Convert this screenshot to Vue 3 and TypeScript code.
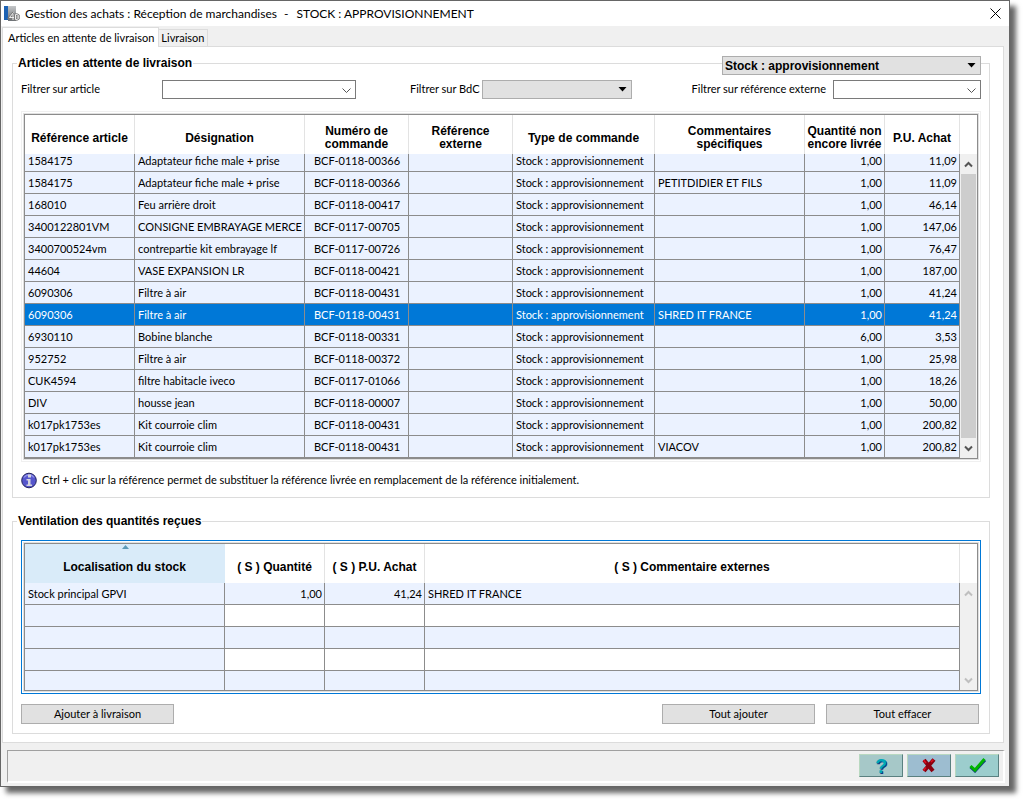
<script setup lang="ts">
import { ref } from 'vue'

interface Article {
  reference: string
  designation: string
  commande: string
  externe: string
  type: string
  commentaire: string
  quantite: string
  prix: string
}

const TYPE = 'Stock : approvisionnement'

function article(reference: string, designation: string, numero: string, commentaire: string, quantite: string, prix: string): Article {
  return { reference, designation, commande: 'BCF-' + numero, externe: '', type: TYPE, commentaire, quantite, prix }
}

const articles: Article[] = [
  article('1584175', 'Adaptateur fiche male + prise', '0118-00366', '', '1,00', '11,09'),
  article('1584175', 'Adaptateur fiche male + prise', '0118-00366', 'PETITDIDIER ET FILS', '1,00', '11,09'),
  article('168010', 'Feu arrière droit', '0118-00417', '', '1,00', '46,14'),
  article('3400122801VM', 'CONSIGNE EMBRAYAGE MERCE', '0117-00705', '', '1,00', '147,06'),
  article('3400700524vm', 'contrepartie kit embrayage lf', '0117-00726', '', '1,00', '76,47'),
  article('44604', 'VASE EXPANSION LR', '0118-00421', '', '1,00', '187,00'),
  article('6090306', 'Filtre à air', '0118-00431', '', '1,00', '41,24'),
  article('6090306', 'Filtre à air', '0118-00431', 'SHRED IT FRANCE', '1,00', '41,24'),
  article('6930110', 'Bobine blanche', '0118-00331', '', '6,00', '3,53'),
  article('952752', 'Filtre à air', '0118-00372', '', '1,00', '25,98'),
  article('CUK4594', 'filtre habitacle iveco', '0117-01066', '', '1,00', '18,26'),
  article('DIV', 'housse jean', '0118-00007', '', '1,00', '50,00'),
  article('k017pk1753es', 'Kit courroie clim', '0118-00431', '', '1,00', '200,82'),
  article('k017pk1753es', 'Kit courroie clim', '0118-00431', 'VIACOV', '1,00', '200,82'),
]

const stocks = [
  { lieu: 'Stock principal GPVI', quantite: '1,00', prix: '41,24', commentaire: 'SHRED IT FRANCE' },
  { lieu: '', quantite: '', prix: '', commentaire: '' },
  { lieu: '', quantite: '', prix: '', commentaire: '' },
  { lieu: '', quantite: '', prix: '', commentaire: '' },
  { lieu: '', quantite: '', prix: '', commentaire: '' },
]

const selected = ref(7)
const filtreArticle = ref('')
const filtreExterne = ref('')
</script>

<template>
  <div class="desktop">
    <main class="window">
      <header class="titlebar">
        <svg class="app-icon" viewBox="0 0 16 16" aria-hidden="true">
          <defs>
            <linearGradient id="metal" x1="0" y1="0" x2="0" y2="1">
              <stop offset="0" stop-color="#c4c6c8" />
              <stop offset="1" stop-color="#6d7175" />
            </linearGradient>
          </defs>
          <rect x="0" y="0" width="4" height="14" fill="#1c62b4" />
          <rect x="4" y="0" width="8" height="15" fill="url(#metal)" />
          <path d="M9.5 6.5 L5.5 11.5 H10 M9 8 V14 M11.5 8.5 V13.5 C16 14 16 8 11.5 8.5" fill="none" stroke="#777" stroke-width="2.5" />
          <path d="M9.5 6.5 L5.5 11.5 H10 M9 8 V14 M11.5 8.5 V13.5 C16 14 16 8 11.5 8.5" fill="none" stroke="#eee" stroke-width="1" />
        </svg>
        <h1>Gestion des achats : Réception de marchandises<span class="dash">-</span>STOCK : APPROVISIONNEMENT</h1>
        <button class="close" type="button" aria-label="Fermer">
          <svg viewBox="0 0 11 11" aria-hidden="true"><path d="M0.5 0.5 L10.5 10.5 M10.5 0.5 L0.5 10.5" /></svg>
        </button>
      </header>

      <nav class="tabs" role="tablist">
        <button class="tab active" type="button" role="tab" aria-selected="true">Articles en attente de livraison</button>
        <button class="tab" type="button" role="tab" aria-selected="false">Livraison</button>
      </nav>

      <section class="panel">
        <fieldset class="group">
          <legend>Articles en attente de livraison</legend>
          <div class="picker type-picker">
            <select aria-label="Type de commande"><option>Stock : approvisionnement</option></select>
            <svg class="triangle" viewBox="0 0 9 5" aria-hidden="true"><path d="M0.5 0 H8.5 L4.5 4.5 Z" /></svg>
          </div>

          <div class="filters">
            <label for="f-article">Filtrer sur article</label>
            <div class="picker">
              <input id="f-article" v-model="filtreArticle" type="text" />
              <svg class="chevron" viewBox="0 0 9 5" aria-hidden="true"><path d="M0.5 0.5 L4.5 4.5 L8.5 0.5" /></svg>
            </div>
            <label for="f-bdc" class="label-bdc">Filtrer sur BdC</label>
            <div class="picker">
              <select id="f-bdc"><option></option></select>
              <svg class="triangle" viewBox="0 0 9 5" aria-hidden="true"><path d="M0.5 0 H8.5 L4.5 4.5 Z" /></svg>
            </div>
            <label for="f-ext" class="label-ext">Filtrer sur référence externe</label>
            <div class="picker">
              <input id="f-ext" v-model="filtreExterne" type="text" />
              <svg class="chevron" viewBox="0 0 9 5" aria-hidden="true"><path d="M0.5 0.5 L4.5 4.5 L8.5 0.5" /></svg>
            </div>
          </div>

          <div class="ring">
            <div class="frame">
              <table class="grid articles">
                <colgroup>
                  <col class="w110" /><col class="w170" /><col class="w104" /><col class="w104" />
                  <col class="w142" /><col /><col class="w80" /><col class="w75" />
                </colgroup>
                <thead>
                  <tr>
                    <th>Référence article</th>
                    <th>Désignation</th>
                    <th>Numéro de<br />commande</th>
                    <th>Référence<br />externe</th>
                    <th>Type de commande</th>
                    <th>Commentaires<br />spécifiques</th>
                    <th>Quantité non<br />encore livrée</th>
                    <th>P.U. Achat</th>
                  </tr>
                </thead>
                <tbody>
                  <tr v-for="(a, i) in articles" :key="i" :class="{ selected: i === selected }" @click="selected = i">
                    <td>{{ a.reference }}</td>
                    <td><div class="clip">{{ a.designation }}</div></td>
                    <td class="center">{{ a.commande }}</td>
                    <td>{{ a.externe }}</td>
                    <td>{{ a.type }}</td>
                    <td>{{ a.commentaire }}</td>
                    <td class="num">{{ a.quantite }}</td>
                    <td class="num">{{ a.prix }}</td>
                  </tr>
                </tbody>
              </table>
              <div class="scroll">
                <div class="scroll-head"></div>
                <button type="button" aria-label="Défiler vers le haut"><svg viewBox="0 0 9 7" aria-hidden="true"><path d="M1 5.5 L4.5 2 L8 5.5" /></svg></button>
                <div class="thumb"></div>
                <button type="button" aria-label="Défiler vers le bas"><svg viewBox="0 0 9 7" aria-hidden="true"><path d="M1 1.5 L4.5 5 L8 1.5" /></svg></button>
              </div>
            </div>
          </div>

          <p class="hint">
            <svg viewBox="0 0 16 16" aria-hidden="true">
              <circle cx="8" cy="8" r="7.3" fill="#5656cc" stroke="#22225c" />
              <path d="M3 5 C5 1.5 11 1.5 13 5" fill="none" stroke="#8c8cea" stroke-width="1.5" />
              <rect x="7" y="2" width="3" height="3" fill="#d4d4de" />
              <path d="M5.5 6.5 H9.5 V12 H11 V13.5 H5.5 V12 H7 V8 H5.5 Z" fill="#d4d4de" />
            </svg>
            <span>Ctrl + clic sur la référence permet de substituer la référence livrée en remplacement de la référence initialement.</span>
          </p>
        </fieldset>

        <fieldset class="group second">
          <legend>Ventilation des quantités reçues</legend>
          <div class="ring focused">
            <div class="frame">
              <table class="grid stocks">
                <colgroup>
                  <col class="w200" /><col class="w100" /><col class="w100" /><col />
                </colgroup>
                <thead>
                  <tr>
                    <th class="sorted">
                      <svg class="sort" viewBox="0 0 7 4" aria-hidden="true"><path d="M0 4 L3.5 0 L7 4 Z" /></svg>
                      Localisation du stock
                    </th>
                    <th>( S ) Quantité</th>
                    <th>( S ) P.U. Achat</th>
                    <th>( S ) Commentaire externes</th>
                  </tr>
                </thead>
                <tbody>
                  <tr v-for="(s, i) in stocks" :key="i">
                    <td>{{ s.lieu }}</td>
                    <td class="num">{{ s.quantite }}</td>
                    <td class="num">{{ s.prix }}</td>
                    <td>{{ s.commentaire }}</td>
                  </tr>
                </tbody>
              </table>
              <div class="scroll idle">
                <div class="scroll-head"></div>
                <button type="button" aria-label="Défiler vers le haut" disabled><svg viewBox="0 0 9 7" aria-hidden="true"><path d="M1 5.5 L4.5 2 L8 5.5" /></svg></button>
                <div class="track"></div>
                <button type="button" aria-label="Défiler vers le bas" disabled><svg viewBox="0 0 9 7" aria-hidden="true"><path d="M1 1.5 L4.5 5 L8 1.5" /></svg></button>
              </div>
            </div>
          </div>
          <div class="actions">
            <button type="button">Ajouter à livraison</button>
            <span class="spacer"></span>
            <button type="button">Tout ajouter</button>
            <button type="button">Tout effacer</button>
          </div>
        </fieldset>
      </section>

      <footer class="footer">
        <button class="help" type="button" aria-label="Aide">?</button>
        <button class="cancel" type="button" aria-label="Annuler">
          <svg viewBox="0 0 14 15" aria-hidden="true">
            <path d="M2 2 L11 13 M12 1.5 L2 13" fill="none" stroke="#8a0010" stroke-width="4" />
            <path d="M1.5 2 L4 5 M9 4 L11.5 1.5 M1.5 12.5 L4 9.5" fill="none" stroke="#e01020" stroke-width="1.5" />
          </svg>
        </button>
        <button class="ok" type="button" aria-label="Valider">
          <svg viewBox="0 0 17 15" aria-hidden="true">
            <path d="M1.5 9 L6 13 L16 2" fill="none" stroke="#103a80" stroke-width="3" />
            <path d="M1.5 8 L6 12 L15.5 1" fill="none" stroke="#00b400" stroke-width="3" />
          </svg>
        </button>
      </footer>
    </main>
  </div>
</template>

<style>
body {
  margin: 0;
  background: #fff;
}
</style>

<style scoped>
.desktop {
  padding: 0 13px 12px 0;
  font: 11px/14px Lato, "Liberation Sans", Arial, sans-serif;
  color: #000;
}
.desktop * {
  box-sizing: border-box;
}
button,
input,
select {
  font: inherit;
  color: inherit;
  margin: 0;
  padding: 0;
}
.window {
  display: flex;
  flex-direction: column;
  background: #f0f0f0;
  border: 1px solid #666;
  box-shadow: 6px 6px 5px rgba(0, 0, 0, 0.6);
}
.titlebar {
  display: flex;
  align-items: center;
  height: 25px;
  padding: 0 8px 0 3px;
  background: #fff;
}
.app-icon {
  width: 16px;
  height: 16px;
  margin-right: 5px;
}
h1 {
  flex: 1;
  margin: 0;
  font: 12px/16px Lato, "Segoe UI", sans-serif;
  white-space: nowrap;
}
.dash {
  margin: 0 8px 0 7px;
}
.close {
  display: flex;
  border: 0;
  background: none;
}
.close svg {
  width: 11px;
  height: 11px;
}
.close path {
  fill: none;
  stroke: #000;
}
.tabs {
  display: flex;
  align-items: flex-end;
  height: 20px;
  margin-left: 1px;
}
.tab {
  height: 17px;
  padding: 0 2px;
  border: 1px solid #dcdcdc;
  border-width: 1px 1px 0 0;
  background: #f0f0f0;
}
.tab.active {
  position: relative;
  z-index: 1;
  height: 20px;
  margin-bottom: -1px;
  padding: 0 4px 0 5px;
  border-left-width: 1px;
  background: #fff;
}
.panel {
  margin: 0 5px 7px 1px;
  padding: 9px 13px 8px 9px;
  border: 1px solid #dcdcdc;
  background: #fff;
}
.group {
  position: relative;
  min-width: 0;
  margin: 0;
  padding: 10px 8px 8px;
  border: 1px solid #dcdcdc;
}
.group.second {
  margin-top: 16px;
  padding: 12px 8px 9px;
}
legend {
  margin-left: -4px;
  padding: 0 1px;
  font: bold 12px/14px "Liberation Sans", Arial, sans-serif;
}
.picker {
  position: relative;
  display: flex;
}
.picker input,
.picker select {
  width: 100%;
  height: 19px;
  border: 1px solid #7a7a7a;
  border-radius: 0;
  background: #fff;
  appearance: none;
}
.picker select {
  border-color: #adadad;
  background: #e1e1e1;
  padding: 0 2px;
}
.picker svg {
  position: absolute;
  pointer-events: none;
}
.triangle {
  top: 7px;
  right: 5px;
  width: 9px;
  height: 5px;
}
.chevron {
  top: 8px;
  right: 5px;
  width: 9px;
  height: 5px;
}
.chevron path {
  fill: none;
  stroke: #555;
}
.type-picker {
  position: absolute;
  top: -14px;
  right: 8px;
  width: 259px;
  font: bold 12px/14px "Liberation Sans", Arial, sans-serif;
}
.filters {
  display: grid;
  grid-template-columns: 141px 194px 126px 150px 1fr 148px;
  align-items: start;
  line-height: 18px;
  margin-bottom: 12px;
}
.label-bdc {
  padding-left: 54px;
}
.label-ext {
  padding-right: 7px;
  text-align: right;
}
.ring {
  padding: 2px;
  border: 1px solid #f0f0f0;
}
.ring.focused {
  border-color: #0078d7;
}
.frame {
  display: flex;
  border: 1px solid #8c8c8c;
  outline: 1px solid #e0e0e0;
}
.grid {
  flex: 1;
  width: 100%;
  min-width: 0;
  table-layout: fixed;
  border-spacing: 0;
}
.w75 { width: 75px; }
.w80 { width: 80px; }
.w100 { width: 100px; }
.w104 { width: 104px; }
.w110 { width: 110px; }
.w142 { width: 142px; }
.w170 { width: 170px; }
.w200 { width: 200px; }
th {
  position: relative;
  height: 39px;
  padding: 7px 0 0;
  border-right: 1px solid #e3e3e3;
  background: #fff;
  font: bold 12px/13px "Liberation Sans", Arial, sans-serif;
  white-space: nowrap;
}
th.sorted {
  background: #d9ebf9;
  border-color: #d9ebf9;
}
.sort {
  position: absolute;
  top: 1px;
  left: calc(50% - 3px);
  width: 7px;
  height: 4px;
  fill: #5c9ab8;
}
td {
  height: 22px;
  padding: 0 2px 0 3px;
  border: 0 solid #8c8c8c;
  border-width: 0 1px 1px 0;
  background: #ebf2ff;
  background-clip: padding-box;
  white-space: nowrap;
}
.clip {
  overflow: hidden;
}
.center {
  text-align: center;
}
.num {
  text-align: right;
}
.selected td {
  background-color: #0078d7;
  color: #fff;
}
.articles tbody tr:first-child td {
  height: 18px;
  padding-bottom: 3px;
}
.stocks tr:nth-child(even) td:not(:first-child) {
  background: #fff;
}
.stocks tr:last-child td {
  height: 19px;
  border-bottom-width: 0;
}
.scroll {
  display: flex;
  flex: none;
  flex-direction: column;
  width: 17px;
  padding: 0 1px;
  background: #f0f0f0;
}
.scroll-head {
  height: 39px;
  margin: 0 -1px;
  background: #fff;
}
.scroll button {
  display: flex;
  align-items: center;
  justify-content: center;
  height: 20px;
  border: 0;
  background: #f0f0f0;
}
.scroll svg {
  width: 9px;
  height: 7px;
}
.scroll path {
  fill: none;
  stroke: #555;
  stroke-width: 2;
}
.scroll.idle path {
  stroke: #bfbfbf;
}
.thumb {
  flex: 1;
  background: #cdcdcd;
}
.track {
  flex: 1;
}
.hint {
  display: flex;
  align-items: flex-start;
  gap: 5px;
  margin: 10px 0 0;
  line-height: 16px;
}
.hint svg {
  width: 16px;
  height: 17px;
}
.actions {
  display: flex;
  margin-top: 10px;
  padding-right: 2px;
  gap: 11px;
}
.spacer {
  flex: 1;
}
.actions button {
  width: 153px;
  height: 20px;
  border: 1px solid #adadad;
  background: #e1e1e1;
}
.footer {
  display: flex;
  justify-content: flex-end;
  gap: 4px;
  height: 33px;
  margin: 0 4px 3px 6px;
  padding: 3px 4px;
  border: 1px solid #a0a0a0;
  border-right: 2px solid #fff;
  border-bottom: 2px solid #fff;
}
.footer button {
  display: flex;
  align-items: center;
  justify-content: center;
  width: 44px;
  height: 23px;
  border: 1px solid #b8d8c0;
  border-right-color: #5a8080;
  border-bottom-color: #5a8080;
  background: #a6c8c8;
}
.footer .help {
  font: bold 20px/20px "Liberation Sans", Arial, sans-serif;
  color: #00a8b8;
  text-shadow: 1px 1px 0 #103a80;
}
.footer .cancel {
  background: #9dbdd0;
}
.footer .ok {
  background: #9ccdcd;
}
.cancel svg {
  width: 14px;
  height: 15px;
}
.ok svg {
  width: 17px;
  height: 15px;
}
</style>
